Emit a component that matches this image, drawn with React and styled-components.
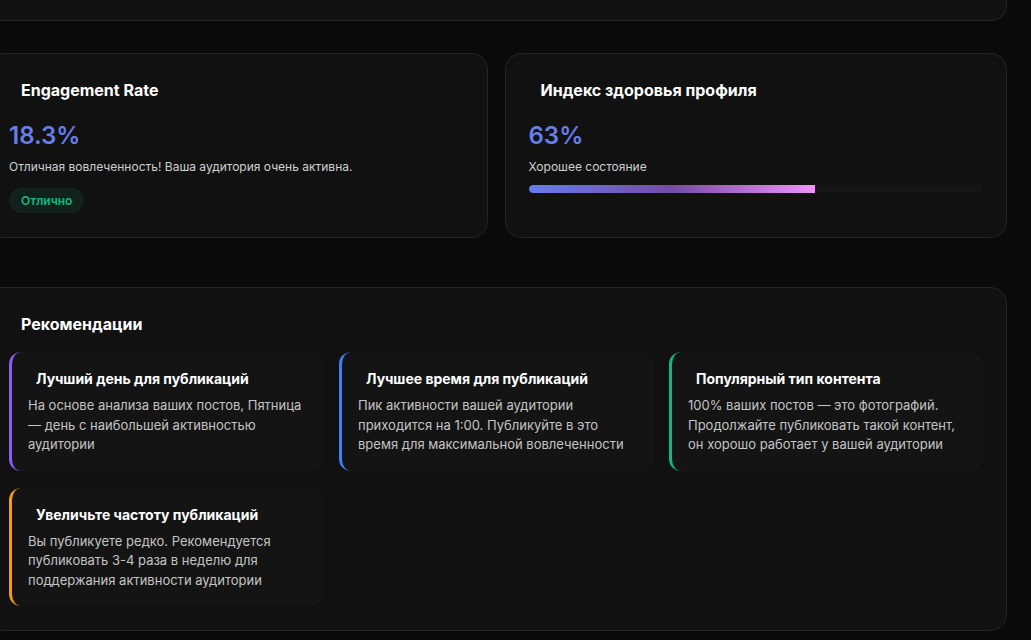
import React from 'react';
import styled, { createGlobalStyle } from 'styled-components';

const GlobalStyle = createGlobalStyle`
  html, body {
    margin: 0;
    padding: 0;
    background: #0a0a0a;
    font-family: Inter, "Noto Sans", sans-serif;
    color: #ffffff;
    overflow: hidden;
  }
  * {
    box-sizing: border-box;
  }
`;

const Page = styled.div`
  width: 1022px;
  margin-left: -15px;
  display: flex;
  flex-direction: column;
`;

const PrevCard = styled.div`
  height: 21px;
  background: #111111;
  border: 1px solid #242424;
  border-top: none;
  border-radius: 0 0 16px 16px;
  margin-bottom: 32px;
`;

const StatsGrid = styled.div`
  display: grid;
  grid-template-columns: 1fr 1fr;
  gap: 17px;
  margin-bottom: 49px;
`;

const Card = styled.section`
  background: #111111;
  border: 1px solid #242424;
  border-radius: 16px;
  padding: 24px 23px;
`;

const CardTitle = styled.h3`
  margin: 0 0 16px;
  padding-left: 12px;
  font-size: 16px;
  line-height: 24px;
  font-weight: 700;
  color: #ffffff;
`;

const Value = styled.div`
  font-size: 24px;
  line-height: 36px;
  font-weight: 600;
  color: #667eea;
`;

const Description = styled.p`
  margin: 4px 0 0;
  font-size: 12px;
  line-height: 18px;
  color: #d0d0d0;
`;

const Badge = styled.span`
  display: inline-block;
  margin-top: 12px;
  padding: 4px 12px 3px;
  border-radius: 13px;
  background: rgba(16, 185, 129, 0.1);
  color: #10b981;
  font-size: 12px;
  line-height: 18px;
  font-weight: 600;
`;

const Track = styled.div`
  margin-top: 9px;
  height: 8px;
  border-radius: 4px;
  background: #161616;
  overflow: hidden;
`;

const Fill = styled.div`
  height: 100%;
  border-radius: 4px 0 0 4px;
  background: linear-gradient(90deg, #667eea 0%, #764ba2 50%, #f093fb 100%);
`;

const RecGrid = styled.div`
  display: grid;
  grid-template-columns: repeat(3, 1fr);
  column-gap: 16px;
  row-gap: 17px;
`;

const RecCard = styled.div`
  background: #141414;
  border-left: 3px solid ${(p) => p.$color};
  border-radius: 12px;
  padding: 16px;
`;

const RecTitle = styled.h4`
  margin: 0 0 7px;
  padding-left: 8px;
  font-size: 14px;
  line-height: 21px;
  font-weight: 700;
  color: #ffffff;
`;

const RecText = styled.p`
  margin: 0;
  font-size: 13px;
  line-height: 19.5px;
  color: #c4c4c4;
`;

const recommendations = [
  {
    color: '#8b5cf6',
    title: 'Лучший день для публикаций',
    text: 'На основе анализа ваших постов, Пятница — день с наибольшей активностью аудитории',
  },
  {
    color: '#3b82f6',
    title: 'Лучшее время для публикаций',
    text: 'Пик активности вашей аудитории приходится на 1:00. Публикуйте в это время для максимальной вовлеченности',
  },
  {
    color: '#10b981',
    title: 'Популярный тип контента',
    text: '100% ваших постов — это фотографий. Продолжайте публиковать такой контент, он хорошо работает у вашей аудитории',
  },
  {
    color: '#f59e0b',
    title: 'Увеличьте частоту публикаций',
    text: 'Вы публикуете редко. Рекомендуется публиковать 3-4 раза в неделю для поддержания активности аудитории',
  },
];

const App = () => {
  const health = 63;
  return (
    <>
      <GlobalStyle />
      <Page>
        <PrevCard />
        <StatsGrid>
          <Card>
            <CardTitle>Engagement Rate</CardTitle>
            <Value>18.3%</Value>
            <Description>Отличная вовлеченность! Ваша аудитория очень активна.</Description>
            <Badge>Отлично</Badge>
          </Card>
          <Card>
            <CardTitle>Индекс здоровья профиля</CardTitle>
            <Value>{health}%</Value>
            <Description>Хорошее состояние</Description>
            <Track>
              <Fill style={{ width: `${health}%` }} />
            </Track>
          </Card>
        </StatsGrid>
        <Card>
          <CardTitle>Рекомендации</CardTitle>
          <RecGrid>
            {recommendations.map((r) => (
              <RecCard key={r.title} $color={r.color}>
                <RecTitle>{r.title}</RecTitle>
                <RecText>{r.text}</RecText>
              </RecCard>
            ))}
          </RecGrid>
        </Card>
      </Page>
    </>
  );
};

export default App;
